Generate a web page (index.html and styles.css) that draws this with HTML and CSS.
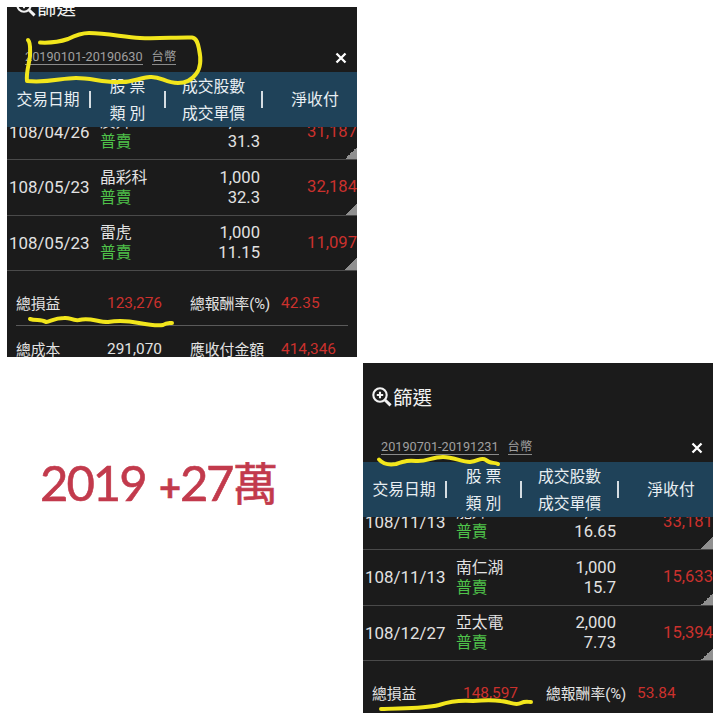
FILE: index.html
```html
<!DOCTYPE html>
<html lang="zh-Hant">
<head>
    <meta charset="UTF-8">
    <meta name="viewport" content="width=device-width, initial-scale=1.0">
    <title>2019 +27萬</title>
    <link rel="stylesheet" href="styles.css">
</head>
<body>
    <div class="collage">
        <!-- 上半年 -->
        <div class="panel scrolled">
            <div class="filter">
                <svg class="filter-icon" viewBox="0 0 20 20">
                    <circle cx="8" cy="8" r="6.7"/>
                    <path d="M8 4.8v6.4M4.8 8h6.4"/>
                    <path class="handle" d="M13 13l5.6 5.4"/>
                </svg>
                <span>篩選</span>
            </div>
            <div class="range">
                <span class="dates">20190101-20190630</span>
                <span class="currency">台幣</span>
                <svg class="close" viewBox="0 0 12 12"><path d="M1.5 1.5l9 9M10.5 1.5l-9 9"/></svg>
            </div>
            <div class="table-head">
                <div>交易日期</div>
                <i></i>
                <div>股 票<br>類 別</div>
                <i></i>
                <div>成交股數<br>成交單價</div>
                <i></i>
                <div>淨收付</div>
            </div>
            <div class="list">
                <div class="row">
                    <div class="date">108/04/26</div>
                    <div class="stock">廣升<br><span class="sell">普賣</span></div>
                    <div class="qty">1,000<br>31.3</div>
                    <div class="net">31,187</div>
                </div>
                <div class="row">
                    <div class="date">108/05/23</div>
                    <div class="stock">晶彩科<br><span class="sell">普賣</span></div>
                    <div class="qty">1,000<br>32.3</div>
                    <div class="net">32,184</div>
                </div>
                <div class="row">
                    <div class="date">108/05/23</div>
                    <div class="stock">雷虎<br><span class="sell">普賣</span></div>
                    <div class="qty">1,000<br>11.15</div>
                    <div class="net">11,097</div>
                </div>
            </div>
            <div class="summary">
                <div class="sum-row">
                    <span>總損益</span>
                    <span class="value red">123,276</span>
                    <span class="label2">總報酬率(%)</span>
                    <span class="value2 red">42.35</span>
                </div>
                <div class="sum-row">
                    <span>總成本</span>
                    <span class="value">291,070</span>
                    <span class="label2">應收付金額</span>
                    <span class="value2 red">414,346</span>
                </div>
            </div>
            <svg class="marker" viewBox="0 0 350 350">
                <path d="M33 35.5C42 36 52 35 61 32C69 28 74 26 82 26C100 26 116 30 133 31C151 32 171 30 185 30.500C190 31 191 37 192 42C194 51 194 61 189 67C184 74 178 76 171 76C158 76 154 69 143 70C131 71 125 76 110 75C94 75 84 71 69 71C54 71 43 76 20 74C19 65 22 58 23 49C23 42 24 36 21 33"/>
                <path d="M23 312C29 314 34 312 39 315C44 314 48 311 57 311C63 310 65 314 72 313C83 310 90 315 101 315C114 313 122 314 132 316C143 318 151 319 156 318C160 315 163 316 165 316"/>
            </svg>
        </div>

        <!-- 全年合計 -->
        <div class="total">
            <span class="year">2019</span><span class="plus">+</span><span class="amount">27</span><span class="unit">萬</span>
        </div>

        <!-- 下半年 -->
        <div class="panel second">
            <div class="filter">
                <svg class="filter-icon" viewBox="0 0 20 20">
                    <circle cx="8" cy="8" r="6.7"/>
                    <path d="M8 4.8v6.4M4.8 8h6.4"/>
                    <path class="handle" d="M13 13l5.6 5.4"/>
                </svg>
                <span>篩選</span>
            </div>
            <div class="range">
                <span class="dates">20190701-20191231</span>
                <span class="currency">台幣</span>
                <svg class="close" viewBox="0 0 12 12"><path d="M1.5 1.5l9 9M10.5 1.5l-9 9"/></svg>
            </div>
            <div class="table-head">
                <div>交易日期</div>
                <i></i>
                <div>股 票<br>類 別</div>
                <i></i>
                <div>成交股數<br>成交單價</div>
                <i></i>
                <div>淨收付</div>
            </div>
            <div class="list">
                <div class="row">
                    <div class="date">108/11/13</div>
                    <div class="stock">龍升<br><span class="sell">普賣</span></div>
                    <div class="qty">2,000<br>16.65</div>
                    <div class="net">33,181</div>
                </div>
                <div class="row">
                    <div class="date">108/11/13</div>
                    <div class="stock">南仁湖<br><span class="sell">普賣</span></div>
                    <div class="qty">1,000<br>15.7</div>
                    <div class="net">15,633</div>
                </div>
                <div class="row">
                    <div class="date">108/12/27</div>
                    <div class="stock">亞太電<br><span class="sell">普賣</span></div>
                    <div class="qty">2,000<br>7.73</div>
                    <div class="net">15,394</div>
                </div>
            </div>
            <div class="summary">
                <div class="sum-row">
                    <span>總損益</span>
                    <span class="value red">148,597</span>
                    <span class="label2">總報酬率(%)</span>
                    <span class="value2 red">53.84</span>
                </div>
            </div>
            <svg class="marker" viewBox="0 0 350 350">
                <path d="M16 96.500C20 101 27 102 33 101C42 98 46 97 53 98C63 99 69 94 80 94C91 94 98 99 107 99C116 98 118 94 123 97C127 101 131 99 135 101"/>
                <path d="M18 346C38 345 60 346 76 342C88 338 98 337 110 338C121 337 131 337 138 338C148 339 152 343 158 340C162 338 165 339 168 339"/>
            </svg>
        </div>
    </div>
</body>
</html>
```

FILE: styles.css
```css
body {
    margin: 0;
    background: #fff;
    font-family: Roboto, 'Noto Sans CJK TC', sans-serif;
}
.collage {
    display: grid;
    grid-template-columns: 350px 350px;
    grid-template-rows: 350px 350px;
    gap: 6px;
    padding: 7px;
}

/* 對帳單截圖 */
.panel {
    position: relative;
    display: flex;
    flex-direction: column;
    overflow: hidden;
    background: #1b1b1b;
    color: #e2e2e2;
}
.second {
    grid-row: 2;
    grid-column: 2;
}
.filter {
    display: flex;
    flex: none;
    align-items: center;
    gap: 1px;
    height: 68px;
    padding-left: 9px;
    font-size: 19.5px;
    color: #f2f2f2;
}
.scrolled .filter {
    margin-top: -34px;
}
.filter span {
    margin-top: -2px;
}
.filter-icon {
    width: 20px;
    height: 20px;
    fill: none;
    stroke: #f2f2f2;
    stroke-width: 2.1;
}
.filter-icon .handle {
    stroke-width: 3;
}
.range {
    display: flex;
    flex: none;
    align-items: baseline;
    height: 31px;
    box-sizing: border-box;
    padding: 9px 10px 0 18px;
    font-size: 12.7px;
    color: #a0a0a0;
}
.range span {
    border-bottom: 1px solid #8a8a8a;
    line-height: 14px;
}
.range .currency {
    margin-left: 9px;
    font-size: 12.3px;
}
.close {
    align-self: flex-start;
    width: 12px;
    height: 12px;
    margin: 2px 0 0 auto;
    stroke: #fff;
    stroke-width: 2.3;
}
.table-head {
    display: grid;
    flex: none;
    grid-template-columns: 82px 2px 73px 2px 95px 2px 94px;
    align-items: center;
    height: 55px;
    background: #1f4259;
    font-size: 15.8px;
    line-height: 27px;
    text-align: center;
    color: #e8eef2;
}
.table-head div:last-child {
    padding-left: 10px;
}
.table-head i {
    width: 1.5px;
    height: 17px;
    background: #d5dde2;
}

/* 明細列表，捲到最底 */
.list {
    display: flex;
    flex: none;
    flex-direction: column;
    justify-content: flex-end;
    height: 144px;
    overflow: hidden;
}
.row {
    display: grid;
    flex: none;
    grid-template-columns: 91px 80px 80px 97px;
    align-items: center;
    height: 55.5px;
    box-sizing: border-box;
    padding-left: 2px;
    border-bottom: 1px solid #4a4a4a;
    background: linear-gradient(135deg, transparent 50%, #909090 50%) right bottom / 12px 12px no-repeat;
    line-height: 20px;
}
.date {
    font-size: 16.9px;
}
.stock {
    padding-top: 1px;
    font-size: 15.8px;
}
.sell {
    color: #4fc24a;
}
.qty {
    padding-top: 1px;
    font-size: 16.6px;
    text-align: right;
}
.net {
    font-size: 16.6px;
    text-align: right;
    color: #cb312d;
}
.summary {
    flex: none;
    padding: 9px 9px 0;
}
.sum-row {
    display: grid;
    grid-template-columns: 60px 86px 119px 1fr;
    align-items: center;
    height: 45px;
    border-bottom: 1px solid #5a5a5a;
    font-size: 14.8px;
}
.value {
    font-size: 15.4px;
    text-align: right;
}
.label2 {
    padding-left: 28px;
    white-space: nowrap;
}
.value2 {
    font-size: 15.4px;
}
.red {
    color: #cb312d;
}

/* 黃色手繪標記 */
.marker {
    position: absolute;
    inset: 0;
    fill: none;
    stroke: #f2e61c;
    stroke-width: 4;
    stroke-linecap: round;
    stroke-linejoin: round;
}

.total {
    display: flex;
    grid-row: 2;
    align-items: baseline;
    padding: 89px 0 0 33px;
    font-family: Lato, 'Noto Sans CJK TC', sans-serif;
    font-size: 49px;
    line-height: 60px;
    color: #c23a4c;
    -webkit-text-stroke: 0.6px #c23a4c;
}
.year {
    width: 119px;
    letter-spacing: -2px;
}
.plus {
    width: 21px;
    font-size: 38px;
    font-weight: bold;
}
.amount {
    width: 53px;
    letter-spacing: -2.5px;
}
.unit {
    font-size: 45px;
}
```
